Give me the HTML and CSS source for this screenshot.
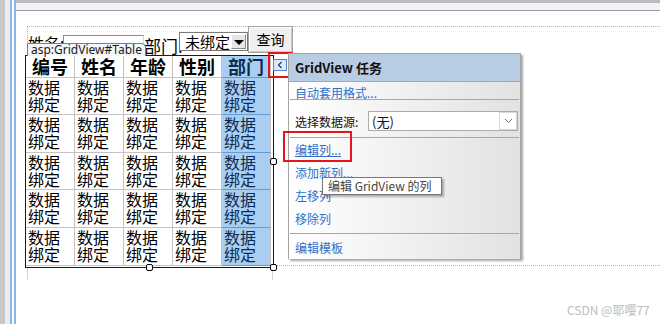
FILE: index.html
```html
<!DOCTYPE html>
<html lang="zh-CN">
<head>
    <meta charset="UTF-8">
    <title>GridView 设计视图</title>
    <link rel="stylesheet" href="styles.css">
</head>
<body>
    <div class="ide">
        <div class="gutter"></div>
        <div class="workspace">
            <div class="ruler"></div>
            <div class="design">
                <div class="form-box">
                    <div class="query-row">
                        <span class="lbl name-lbl">姓名:</span>
                        <span class="textbox"></span>
                        <span class="lbl dept-lbl">部门:</span>
                        <span class="ddl">
                            <span class="ddl-text">未绑定</span>
                            <span class="ddl-btn"><span class="tri"></span></span>
                        </span>
                        <span class="btn">查询</span>
                    </div>

                    <div class="grid-wrap">
                        <span class="ctl-tag">asp:GridView#Table</span>
                        <div class="gridview">
                            <div class="cell head">编号</div>
                            <div class="cell head">姓名</div>
                            <div class="cell head">年龄</div>
                            <div class="cell head">性别</div>
                            <div class="cell head sel">部门</div>

                            <div class="cell">数据<br>绑定</div>
                            <div class="cell">数据<br>绑定</div>
                            <div class="cell">数据<br>绑定</div>
                            <div class="cell">数据<br>绑定</div>
                            <div class="cell sel">数据<br>绑定</div>

                            <div class="cell">数据<br>绑定</div>
                            <div class="cell">数据<br>绑定</div>
                            <div class="cell">数据<br>绑定</div>
                            <div class="cell">数据<br>绑定</div>
                            <div class="cell sel">数据<br>绑定</div>

                            <div class="cell">数据<br>绑定</div>
                            <div class="cell">数据<br>绑定</div>
                            <div class="cell">数据<br>绑定</div>
                            <div class="cell">数据<br>绑定</div>
                            <div class="cell sel">数据<br>绑定</div>

                            <div class="cell">数据<br>绑定</div>
                            <div class="cell">数据<br>绑定</div>
                            <div class="cell">数据<br>绑定</div>
                            <div class="cell">数据<br>绑定</div>
                            <div class="cell sel">数据<br>绑定</div>

                            <div class="cell">数据<br>绑定</div>
                            <div class="cell">数据<br>绑定</div>
                            <div class="cell">数据<br>绑定</div>
                            <div class="cell">数据<br>绑定</div>
                            <div class="cell sel">数据<br>绑定</div>
                        </div>

                        <!-- 选中控件的调整手柄 -->
                        <span class="handle h-mid"></span>
                        <span class="handle h-corner"></span>
                        <span class="handle h-side"></span>

                        <span class="smart-btn">
                            <svg width="6" height="8" viewBox="0 0 6 8"><polyline points="4.5,1 1.5,4 4.5,7" fill="none" stroke="#1d3d73" stroke-width="1.2"/></svg>
                        </span>
                        <span class="mark mark-btn"></span>
                    </div>
                    <div class="grid-foot"></div>
                </div>

                <!-- 智能标记面板 -->
                <div class="tasks">
                    <div class="tasks-head">GridView 任务</div>
                    <div class="tasks-body">
                        <a class="task-link auto">自动套用格式...</a>
                        <div class="sep"></div>
                        <div class="source-row">
                            <span class="source-lbl">选择数据源:</span>
                            <span class="source-ddl">
                                <span class="source-text">(无)</span>
                                <span class="chev">
                                    <svg width="9" height="6" viewBox="0 0 9 6"><polyline points="1,1 4.5,4.5 8,1" fill="none" stroke="#6b6b6b" stroke-width="1"/></svg>
                                </span>
                            </span>
                        </div>
                        <div class="sep"></div>
                        <ul class="task-list">
                            <li><a class="task-link edit">编辑列...</a></li>
                            <li><a class="task-link">添加新列...</a></li>
                            <li><a class="task-link">左移列</a></li>
                            <li><a class="task-link">移除列</a></li>
                        </ul>
                        <div class="sep sep-last"></div>
                        <a class="task-link template">编辑模板</a>
                    </div>
                </div>

                <span class="mark mark-edit"></span>
                <div class="tooltip">编辑 GridView 的列</div>
            </div>
        </div>
    </div>

    <div class="watermark">CSDN @耶嘤77</div>
</body>
</html>
```

FILE: styles.css
```css
* {
    margin: 0;
    padding: 0;
    box-sizing: border-box;
}

html, body {
    width: 660px;
    height: 324px;
    overflow: hidden;
    background: #fff;
}

body {
    position: relative;
    font-family: "Noto Sans CJK SC", "Noto Sans", sans-serif;
    color: #000;
}

.ide {
    display: flex;
    height: 324px;
}

.gutter {
    width: 16px;
    flex: none;
    background: linear-gradient(to right,
        #c8c8c8 0, #c8c8c8 5px,
        #ececec 5px, #ececec 10px,
        #86b7e5 10px, #86b7e5 12px,
        #fff 12px, #fff 14px,
        #86b7e5 14px, #86b7e5 16px);
}

.workspace {
    flex: 1;
    display: flex;
    flex-direction: column;
}

.ruler {
    height: 11px;
    flex: none;
    background: #f0f4f9;
    border-top: 3px solid #bdbdbd;
    border-bottom: 1px solid #9c9c9c;
}

.design {
    position: relative;
    flex: 1;
    padding: 15px 0 0 11px;
}

.form-box {
    height: 240px;
    border-top: 1px dotted #b5b5b5;
    border-left: 1px dotted #b5b5b5;
    border-bottom: 1px dotted #b5b5b5;
}

/* 查询条件 */
.query-row {
    display: flex;
    align-items: flex-start;
    height: 28px;
}

.lbl {
    line-height: 18px;
    white-space: nowrap;
}

.name-lbl {
    width: 35px;
    font-size: 16px;
    margin-top: 7px;
}

.textbox {
    width: 81px;
    height: 16px;
    margin-top: 8px;
    border: 1px solid;
    border-color: #8d8d8d #d6d6d6 #d6d6d6 #8d8d8d;
    background: #fff;
}

.dept-lbl {
    width: 35px;
    font-size: 17px;
    margin-top: 10px;
}

.ddl {
    display: flex;
    width: 69px;
    height: 19px;
    margin-top: 5px;
    border: 1px solid #7a7a7a;
    background: #fff;
}

.ddl-text {
    flex: 1;
    font-size: 15px;
    line-height: 17px;
    padding-left: 5px;
}

.ddl-btn {
    width: 15px;
    margin: 1px;
    display: flex;
    align-items: center;
    justify-content: center;
    background: #e6e6e6;
    border: 1px solid;
    border-color: #fff #8a8a8a #8a8a8a #fff;
}

.tri {
    width: 0;
    height: 0;
    border-left: 5px solid transparent;
    border-right: 5px solid transparent;
    border-top: 5px solid #000;
    margin-top: 1px;
}

.btn {
    width: 45px;
    height: 27px;
    margin-top: -1px;
    font-size: 14px;
    line-height: 25px;
    text-align: center;
    background: #f0f0f0;
    border: 1px solid #a3a3a3;
    box-shadow: inset 1px 1px 0 #fff, inset -1px -1px 0 #c8c8c8;
}

/* GridView */
.grid-wrap {
    position: relative;
    width: fit-content;
    margin-left: -3px;
}

.gridview {
    display: grid;
    grid-template-columns: repeat(5, 49px);
    grid-template-rows: 22px 37px 38px 37px 38px 38px;
    border: 1px solid #1a1a1a;
    padding: 0 2px 1px 0;
    background: #fff;
}

.cell {
    border-right: 1px solid #c3c3c3;
    border-bottom: 1px solid #c3c3c3;
    font-size: 16px;
    line-height: 17px;
    padding: 1px 0 0 2px;
}

.cell.head {
    font-size: 18px;
    font-weight: bold;
    line-height: 21px;
    text-align: center;
    padding: 0;
}

.cell.sel {
    background: #a9cef1;
    color: #0b2b52;
    border-bottom-color: #619bd3;
}

.ctl-tag {
    position: absolute;
    left: 2px;
    top: -12px;
    height: 13px;
    padding: 0 3px;
    font-family: "Noto Sans", sans-serif;
    font-size: 12px;
    line-height: 11px;
    color: #1a1a1a;
    background: #f3f6fb;
    border: 1px solid #4d86d6;
    border-bottom: none;
    border-radius: 0 5px 0 0;
    white-space: nowrap;
}

.handle {
    position: absolute;
    width: 7px;
    height: 7px;
    background: #fff;
    border: 1px solid #000;
    border-radius: 2px;
}

.h-mid { left: 121px; top: 209px; }
.h-corner { left: 245px; top: 209px; }
.h-side { left: 245px; top: 103px; }

.smart-btn {
    position: absolute;
    left: 248px;
    top: 4px;
    width: 14px;
    height: 12px;
    display: flex;
    align-items: center;
    justify-content: center;
    background: #dde8f6;
    border: 1px solid #4f86cf;
}

.mark {
    position: absolute;
    border: 2px solid #e8141a;
}

.mark-btn {
    left: 243px;
    top: -3px;
    width: 25px;
    height: 26px;
}

.grid-foot {
    width: 246px;
    height: 12px;
    margin-left: -1px;
    border-left: 1px solid #ddd0d0;
    border-right: 1px solid #ddd0d0;
}

/* GridView 任务面板 */
.tasks {
    position: absolute;
    left: 272px;
    top: 42px;
    width: 233px;
    height: 206px;
    border: 1px solid #a3a3a3;
    box-shadow: 2px 2px 2px rgba(0,0,0,0.35);
    display: flex;
    flex-direction: column;
    font-size: 12px;
}

.tasks-head {
    height: 28px;
    flex: none;
    padding-left: 6px;
    line-height: 28px;
    font-size: 13px;
    font-weight: bold;
    color: #111;
    background: #b8cce4;
    border-bottom: 1px solid #9aa9bc;
}

.tasks-body {
    flex: 1;
    padding: 0 1px 0 6px;
    background: linear-gradient(to right, #ffffff, #e2e2e2);
}

.task-link {
    display: block;
    color: #2f6fc6;
    line-height: 13px;
    white-space: nowrap;
}

.auto {
    padding-top: 4px;
    height: 17px;
}

.sep {
    height: 1px;
    margin-left: -5px;
    background: #a8a8a8;
}

.source-row {
    display: flex;
    align-items: center;
    padding: 11px 0 6px;
    color: #111;
}

.source-lbl {
    width: 73px;
}

.source-ddl {
    display: flex;
    align-items: center;
    width: 150px;
    height: 20px;
    background: #fff;
    border: 1px solid #ababab;
    font-size: 13px;
}

.source-text {
    flex: 1;
    padding-left: 3px;
}

.chev {
    width: 18px;
    height: 18px;
    display: flex;
    align-items: center;
    justify-content: center;
    border: 1px solid #d6d6d6;
}

.task-list {
    list-style: none;
}

.task-list .task-link {
    line-height: 23px;
}

.edit {
    text-decoration: underline;
}

.sep-last {
    margin-top: 3px;
}

.template {
    padding-top: 2px;
    line-height: 23px;
}

.mark-edit {
    left: 267px;
    top: 120px;
    width: 69px;
    height: 31px;
}

.tooltip {
    position: absolute;
    left: 306px;
    top: 166px;
    width: 120px;
    height: 18px;
    padding-left: 5px;
    font-size: 12px;
    line-height: 16px;
    color: #444;
    background: #fff;
    border: 1px solid #767676;
    box-shadow: 2px 2px 2px rgba(0,0,0,0.3);
    white-space: nowrap;
}

.watermark {
    position: absolute;
    left: 567px;
    top: 301px;
    font-size: 12px;
    color: #bcbcbc;
    white-space: nowrap;
}
```
